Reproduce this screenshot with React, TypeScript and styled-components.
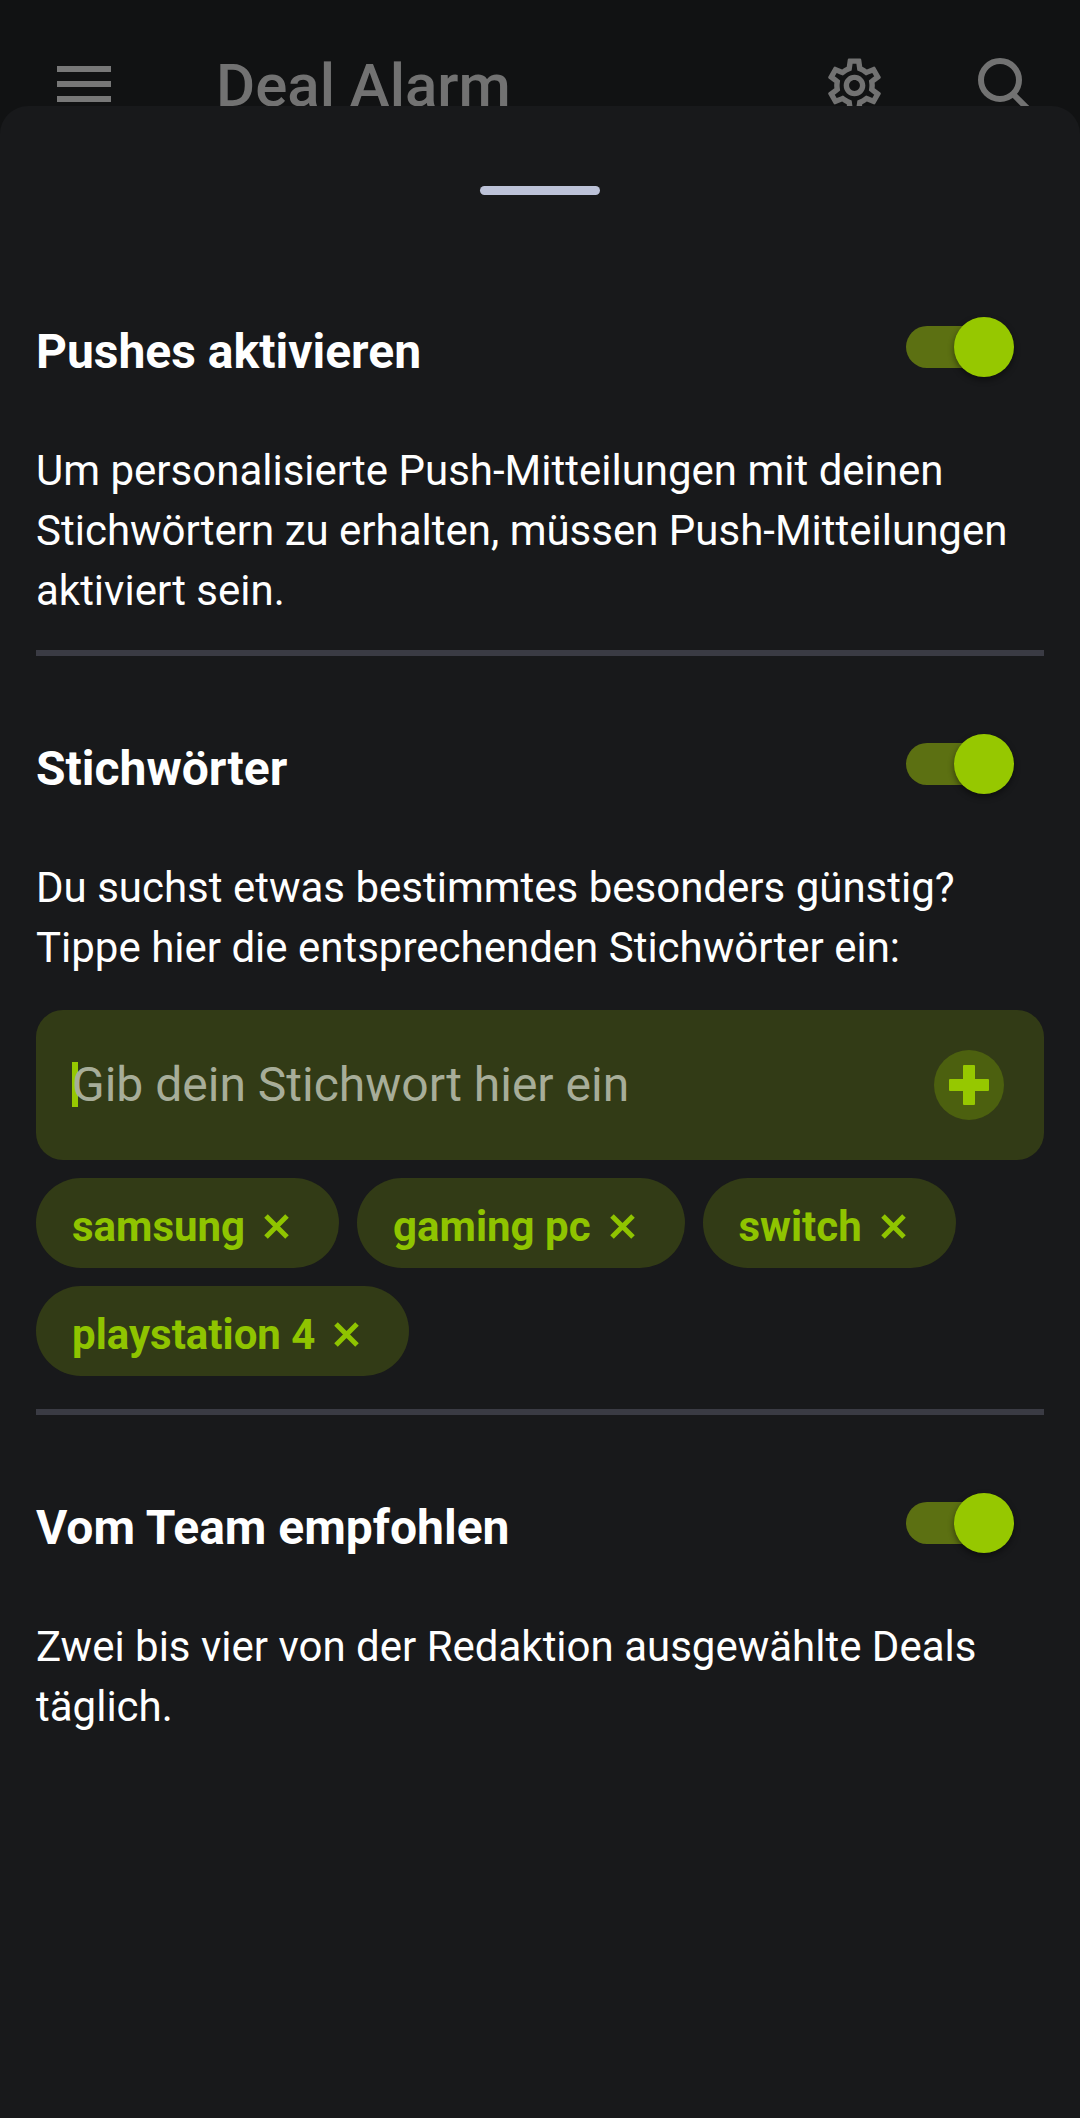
import React from "react";
import styled, { createGlobalStyle } from "styled-components";

const GlobalStyle = createGlobalStyle`
  html, body {
    margin: 0;
    padding: 0;
    background: #18191b;
  }
  * {
    box-sizing: border-box;
  }
`;

const tags = ["samsung", "gaming pc", "switch", "playstation 4"];

function Toggle() {
    return (
        <Track>
            <Knob />
        </Track>
    );
}

function Chip({ label }: { label: string }) {
    return (
        <ChipBox>
            <span>{label}</span>
            <svg width="27" height="27" viewBox="0 0 27 27">
                <path d="M3 3 L24 24 M24 3 L3 24" stroke="#8fc400" strokeWidth="5" fill="none" />
            </svg>
        </ChipBox>
    );
}

export default function App() {
    return (
        <>
            <GlobalStyle />
            <Page>
                <TopBar>
                    <MenuIcon>
                        <i />
                        <i />
                        <i />
                    </MenuIcon>
                    <Title>Deal Alarm</Title>
                    <Actions>
                        <svg width="65" height="65" viewBox="0 0 24 24" fill="#727272">
                            <path d="M19.43 12.98c.04-.32.07-.64.07-.98 0-.34-.03-.66-.07-.98l2.11-1.65c.19-.15.24-.42.12-.64l-2-3.46c-.09-.16-.26-.25-.44-.25-.06 0-.12.01-.17.03l-2.49 1c-.52-.4-1.08-.73-1.69-.98l-.38-2.65C14.46 2.18 14.25 2 14 2h-4c-.25 0-.46.18-.49.42l-.38 2.65c-.61.25-1.17.59-1.69.98l-2.49-1c-.06-.02-.12-.03-.18-.03-.17 0-.34.09-.43.25l-2 3.46c-.13.22-.07.49.12.64l2.11 1.65c-.04.32-.07.65-.07.98 0 .33.03.66.07.98l-2.11 1.65c-.19.15-.24.42-.12.64l2 3.46c.09.16.26.25.44.25.06 0 .12-.01.17-.03l2.49-1c.52.4 1.08.73 1.69.98l.38 2.65c.03.24.24.42.49.42h4c.25 0 .46-.18.49-.42l.38-2.65c.61-.25 1.17-.59 1.69-.98l2.49 1c.06.02.12.03.18.03.17 0 .34-.09.43-.25l2-3.46c.12-.22.07-.49-.12-.64l-2.11-1.65zm-1.98-1.71c.04.31.05.52.05.73 0 .21-.02.43-.05.73l-.14 1.13.89.7 1.08.84-.7 1.21-1.27-.51-1.04-.42-.9.68c-.43.32-.84.56-1.25.73l-1.06.43-.16 1.13-.2 1.35h-1.4l-.19-1.35-.16-1.13-1.06-.43c-.43-.18-.83-.41-1.23-.71l-.91-.7-1.06.43-1.27.51-.7-1.21 1.08-.84.89-.7-.14-1.13c-.03-.31-.05-.54-.05-.74s.02-.43.05-.73l.14-1.13-.89-.7-1.08-.84.7-1.21 1.27.51 1.04.42.9-.68c.43-.32.84-.56 1.25-.73l1.06-.43.16-1.13.2-1.35h1.39l.19 1.35.16 1.13 1.06.43c.43.18.83.41 1.23.71l.91.7 1.06-.43 1.27-.51.7 1.21-1.07.85-.89.7.14 1.13zM12 8c-2.21 0-4 1.79-4 4s1.79 4 4 4 4-1.79 4-4-1.79-4-4-4zm0 6c-1.1 0-2-.9-2-2s.9-2 2-2 2 .9 2 2-.9 2-2 2z" />
                        </svg>
                        <svg width="60" height="60" viewBox="0 0 60 60" fill="none" stroke="#727272" strokeWidth="6">
                            <circle cx="25" cy="27" r="19" />
                            <path d="M39 42 L60 63" />
                        </svg>
                    </Actions>
                </TopBar>
                <Sheet>
                    <Handle />
                    <Section>
                        <Header>
                            <Heading>Pushes aktivieren</Heading>
                            <Toggle />
                        </Header>
                        <Body>
                            Um personalisierte Push-Mitteilungen mit deinen Stichwörtern zu erhalten, müssen
                            Push-Mitteilungen aktiviert sein.
                        </Body>
                    </Section>
                    <Divider />
                    <Section>
                        <Header>
                            <Heading>Stichwörter</Heading>
                            <Toggle />
                        </Header>
                        <Body>
                            Du suchst etwas bestimmtes besonders günstig?
                            <br />
                            Tippe hier die entsprechenden Stichwörter ein:
                        </Body>
                        <InputBox>
                            <Caret />
                            <Placeholder>Gib dein Stichwort hier ein</Placeholder>
                            <AddButton>
                                <svg width="42" height="42" viewBox="0 0 42 42">
                                    <path d="M15 2a1 1 0 0 1 1-1h10a1 1 0 0 1 1 1v13h13a1 1 0 0 1 1 1v10a1 1 0 0 1-1 1h-13v13a1 1 0 0 1-1 1h-10a1 1 0 0 1-1-1v-13h-13a1 1 0 0 1-1-1v-10a1 1 0 0 1 1-1h13z" fill="#96c800" />
                                </svg>
                            </AddButton>
                        </InputBox>
                        <ChipList>
                            {tags.map((tag) => (
                                <Chip key={tag} label={tag} />
                            ))}
                        </ChipList>
                    </Section>
                    <Divider />
                    <Section>
                        <Header>
                            <Heading>Vom Team empfohlen</Heading>
                            <Toggle />
                        </Header>
                        <Body>Zwei bis vier von der Redaktion ausgewählte Deals täglich.</Body>
                    </Section>
                </Sheet>
            </Page>
        </>
    );
}

const Page = styled.div`
  width: 1080px;
  height: 2118px;
  overflow: hidden;
  background: #111213;
  font-family: Roboto, "Liberation Sans", sans-serif;
`;

const TopBar = styled.div`
  height: 106px;
  padding: 66px 45px 0 57px;
  display: flex;
  align-items: flex-start;
  overflow: hidden;
`;

const MenuIcon = styled.div`
  width: 54px;
  display: flex;
  flex-direction: column;
  gap: 9px;

  i {
    display: block;
    height: 6px;
    background: #787878;
  }
`;

const Title = styled.div`
  margin-left: 105px;
  font-size: 60px;
  line-height: 40px;
  font-weight: 500;
  color: #727272;
`;

const Actions = styled.div`
  margin-left: auto;
  margin-top: -13px;
  display: flex;
  gap: 88px;
`;

const Sheet = styled.div`
  height: 2012px;
  background: #18191b;
  border-radius: 28px 28px 0 0;
  padding: 80px 36px 0;
  display: flex;
  flex-direction: column;
`;

const Handle = styled.div`
  width: 120px;
  height: 9px;
  border-radius: 5px;
  background: #bcc2d8;
  align-self: center;
  margin-bottom: 122px;
`;

const Section = styled.div`
  display: flex;
  flex-direction: column;
`;

const Header = styled.div`
  display: flex;
  align-items: center;
  justify-content: space-between;
  height: 60px;
  margin-bottom: 64px;
`;

const Heading = styled.div`
  font-size: 48px;
  line-height: 60px;
  font-weight: 700;
  color: #fff;
  padding-top: 10px;
`;

const Track = styled.div`
  position: relative;
  width: 94px;
  height: 42px;
  border-radius: 21px;
  background: #5c7012;
  margin-right: 44px;
`;

const Knob = styled.div`
  position: absolute;
  right: -14px;
  top: -9px;
  width: 60px;
  height: 60px;
  border-radius: 50%;
  background: #96c800;
  box-shadow: 0 3px 6px rgba(0, 0, 0, 0.45);
`;

const Body = styled.div`
  font-size: 42px;
  line-height: 60px;
  color: #fff;
`;

const Divider = styled.div`
  height: 6px;
  background: #3a3b44;
  margin: 29px 0 78px;
`;

const InputBox = styled.div`
  height: 150px;
  margin-top: 32px;
  border-radius: 27px;
  background: #323b16;
  display: flex;
  align-items: center;
  padding: 0 40px 0 36px;
`;

const Caret = styled.div`
  width: 6px;
  height: 45px;
  background: #96c800;
  margin-top: -1px;
`;

const Placeholder = styled.div`
  margin-left: -6px;
  margin-top: -1px;
  font-size: 48px;
  color: #a7ad99;
`;

const AddButton = styled.div`
  width: 70px;
  height: 70px;
  margin-left: auto;
  border-radius: 50%;
  background: #4c600f;
  display: flex;
  align-items: center;
  justify-content: center;
`;

const ChipList = styled.div`
  display: flex;
  flex-wrap: wrap;
  gap: 18px;
  margin: 18px 0 4px;
`;

const ChipBox = styled.div`
  height: 90px;
  border-radius: 45px;
  background: #323b16;
  display: flex;
  align-items: center;
  gap: 18px;
  padding: 6px 49px 0 36px;
  font-size: 42px;
  font-weight: 700;
  color: #8fc400;
`;
